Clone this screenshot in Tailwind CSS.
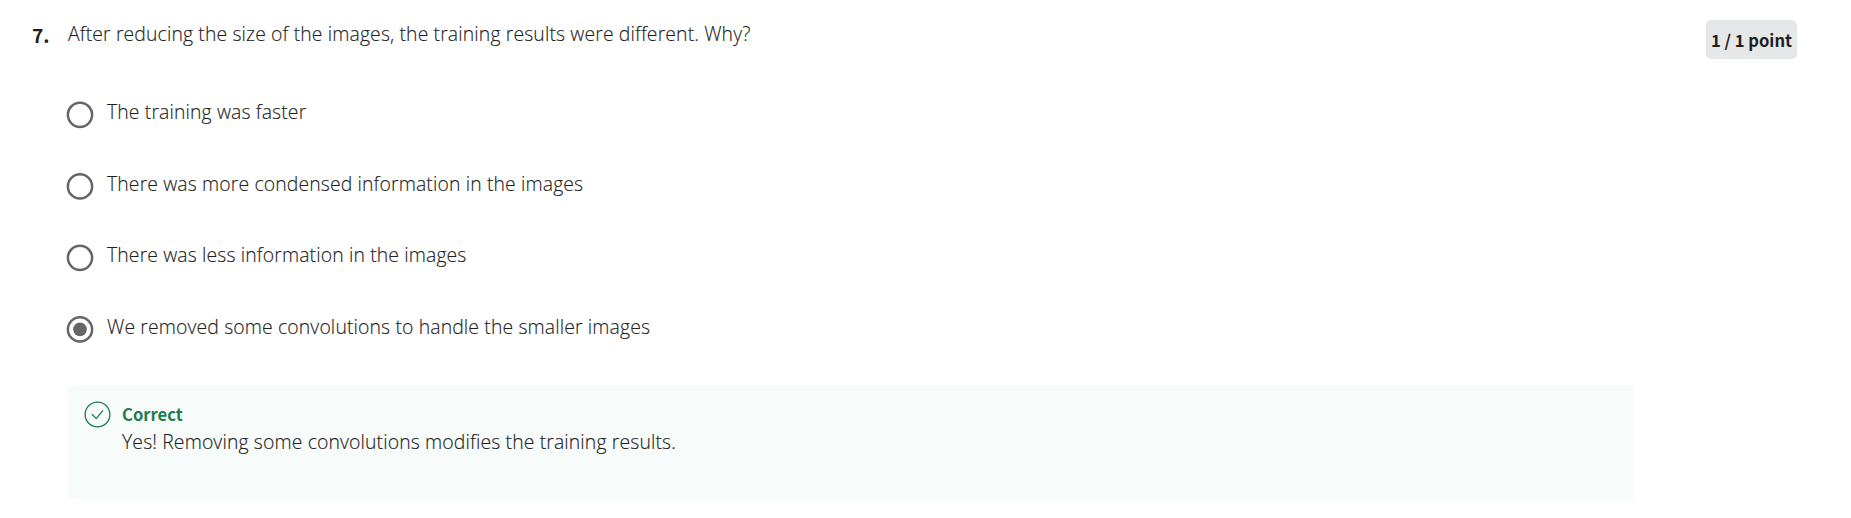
<!DOCTYPE html>
<html lang="en"><head><meta charset="utf-8"><title>Quiz</title>
<script src="https://cdn.jsdelivr.net/npm/@tailwindcss/browser@4"></script></head>
<body class="bg-white font-['Open_Sans',sans-serif] text-[#1f1f1f]">
<main class="flex h-[518px] items-start overflow-hidden pl-8 pt-5">
<div class="w-9 shrink-0 font-['Noto_Sans_CJK_SC',sans-serif] text-[19.2px] font-bold leading-[30px]">7.</div>
<section class="w-[1566px] shrink-0">
<h1 class="text-[19.4px] font-light leading-7 tracking-[0.12px] [-webkit-text-stroke:0.15px]">After reducing the size of the images, the training results were different. Why?</h1>
<div class="mt-[50px] flex flex-col gap-[43.5px] text-[19.4px] font-light leading-7 tracking-[0.12px] [-webkit-text-stroke:0.15px]">
<label class="flex h-7 gap-[11px]"><svg class="-ml-0.5 mt-[3px] size-7 shrink-0" viewBox="0 0 28 28"><circle cx="14" cy="13.8" r="12.1" fill="none" stroke="#666" stroke-width="2.5"/></svg><span class="pl-0.5">The training was faster</span></label>
<label class="flex h-7 gap-[11px]"><svg class="-ml-0.5 mt-[3px] size-7 shrink-0" viewBox="0 0 28 28"><circle cx="14" cy="13.4" r="12.1" fill="none" stroke="#666" stroke-width="2.5"/></svg><span class="pl-0.5">There was more condensed information in the images</span></label>
<label class="flex h-7 gap-[11px]"><svg class="-ml-0.5 mt-[3px] size-7 shrink-0" viewBox="0 0 28 28"><circle cx="14" cy="13.8" r="12.1" fill="none" stroke="#666" stroke-width="2.5"/></svg><span class="pl-0.5">There was less information in the images</span></label>
<label class="flex h-7 gap-[11px]"><svg class="-ml-0.5 mt-[3px] size-7 shrink-0" viewBox="0 0 28 28"><circle cx="14" cy="13.4" r="12.1" fill="none" stroke="#666" stroke-width="2.5"/><circle cx="14" cy="13.4" r="6.8" fill="#666"/></svg><span class="pl-0.5">We removed some convolutions to handle the smaller images</span></label>
</div>
<div class="mt-[44.5px] flex h-[114px] gap-3 bg-[#f7fbf9] pl-4 pt-[15px]">
<svg class="h-7 w-[27px] shrink-0" viewBox="0 0 27 28" fill="none" stroke="#1d7c50" stroke-width="1.3"><circle cx="13.5" cy="14.5" r="12.4"/><path d="m8 14.3 4.2 4.3 6.8-8.2"/></svg>
<div class="-ml-px"><div class="font-['Noto_Sans_CJK_SC',sans-serif] text-[16.6px] font-bold leading-7 text-[#1d7c50]">Correct</div><p class="text-[19.4px] font-light leading-7 tracking-[0.12px] [-webkit-text-stroke:0.15px]">Yes! Removing some convolutions modifies the training results.</p></div></div>
</section>
<div class="ml-[72px] h-[39px] w-[91px] rounded-[5px] bg-[#e5e7e8] text-center font-['Noto_Sans_CJK_SC',sans-serif] text-[16.6px] font-bold leading-[41px]">1 / 1 point</div>
</main></body></html>
